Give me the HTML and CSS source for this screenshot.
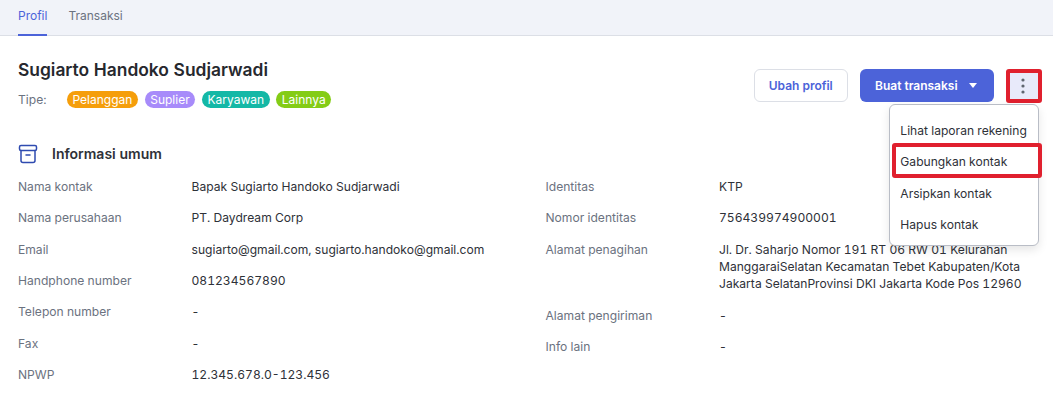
FILE: index.html
```html
<!DOCTYPE html>
<html lang="id">
<head>
<meta charset="utf-8">
<title>Profil kontak</title>
<link rel="stylesheet" href="styles.css">
</head>
<body>
<nav class="tabs">
  <a class="tab active">Profil</a>
  <a class="tab">Transaksi</a>
</nav>
<main class="page">
  <header class="head">
    <div>
      <h1 class="name">Sugiarto Handoko Sudjarwadi</h1>
      <div class="types">
        <span class="types-label">Tipe:</span>
        <span class="badge orange">Pelanggan</span>
        <span class="badge purple">Suplier</span>
        <span class="badge teal">Karyawan</span>
        <span class="badge green">Lainnya</span>
      </div>
    </div>
    <div class="actions">
      <button class="btn outline">Ubah profil</button>
      <button class="btn primary">Buat transaksi <span class="caret"></span></button>
      <button class="more" aria-label="Lainnya">
        <svg width="4" height="16" viewBox="0 0 4 16"><circle cx="2" cy="2" r="1.6"/><circle cx="2" cy="8" r="1.6"/><circle cx="2" cy="14" r="1.6"/></svg>
      </button>
      <ul class="menu">
        <li>Lihat laporan rekening</li>
        <li class="marked">Gabungkan kontak</li>
        <li>Arsipkan kontak</li>
        <li>Hapus kontak</li>
      </ul>
    </div>
  </header>
  <h2 class="section">
    <svg class="section-icon" width="20" height="20" viewBox="0 0 20 20" fill="none" stroke="#2f4bb0" stroke-width="1.5" stroke-linejoin="round" stroke-linecap="round">
      <rect x="1.5" y="1.5" width="17" height="5" rx="1.5"/>
      <path d="M3 6.5V16.5a2 2 0 0 0 2 2H15a2 2 0 0 0 2-2V6.5"/>
      <path d="M8 11H12"/>
    </svg>
    Informasi umum
  </h2>
  <div class="columns">
    <dl class="list left">
      <dt>Nama kontak</dt><dd>Bapak Sugiarto Handoko Sudjarwadi</dd>
      <dt>Nama perusahaan</dt><dd>PT. Daydream Corp</dd>
      <dt>Email</dt><dd>sugiarto@gmail.com, sugiarto.handoko@gmail.com</dd>
      <dt>Handphone number</dt><dd>081234567890</dd>
      <dt>Telepon number</dt><dd>-</dd>
      <dt>Fax</dt><dd>-</dd>
      <dt>NPWP</dt><dd>12.345.678.0-123.456</dd>
    </dl>
    <dl class="list right">
      <dt>Identitas</dt><dd>KTP</dd>
      <dt>Nomor identitas</dt><dd>756439974900001</dd>
      <dt>Alamat penagihan</dt><dd>Jl. Dr. Saharjo Nomor 191 RT 06 RW 01 Kelurahan ManggaraiSelatan Kecamatan Tebet Kabupaten/Kota Jakarta SelatanProvinsi DKI Jakarta Kode Pos 12960</dd>
      <dt>Alamat pengiriman</dt><dd>-</dd>
      <dt>Info lain</dt><dd>-</dd>
    </dl>
  </div>
</main>
</body>
</html>
```
FILE: styles.css
```css
* { box-sizing: border-box; }
html, body { margin: 0; height: 100%; overflow: hidden; }
body { background: #fff; color: #2e3138; font-family: Inter, "Liberation Sans", sans-serif; font-size: 12.1px; line-height: 17.33px; font-variant-numeric: tabular-nums; }

.tabs { display: flex; gap: 21px; height: 36px; padding: 0 18px; background: #f1f3f9; border-bottom: 1px solid #dcdfe6; }
.tab { height: 36px; padding-top: 7px; color: #6b7280; font-size: 12px; }
.tab.active { color: #4c63d9; border-bottom: 2px solid #4c63d9; }

.page { padding: 0 18px; }
.head { display: flex; justify-content: space-between; height: 108px; padding-top: 23px; }
.name { margin: 0; font-size: 17.4px; line-height: 22px; font-weight: 600; color: #26282e; }
.types { display: flex; align-items: center; margin-top: 10px; }
.types-label { width: 49px; color: #6b7280; }
.badge { height: 17.33px; margin-right: 6.8px; padding: 0 5.5px; border-radius: 9px; color: #fff; font-size: 12px; line-height: 17.33px; }
.orange { background: #f59e0b; }
.purple { background: #a78bfa; }
.teal { background: #14b8a6; }
.green { background: #84cc16; }

.actions { position: relative; display: flex; align-items: flex-start; margin-right: -7px; padding-top: 10px; }
.btn { height: 33px; border-radius: 6px; font: 600 12px Inter, "Liberation Sans", sans-serif; white-space: nowrap; }
.outline { width: 94.5px; margin-right: 12px; background: #fff; color: #4c63d9; border: 1px solid #dcdfe6; }
.primary { display: flex; align-items: center; width: 134px; margin-right: 12px; padding: 0 15px; background: #4c63d9; color: #fff; border: 0; }
.caret { margin-left: 11px; border-left: 4.5px solid transparent; border-right: 4.5px solid transparent; border-top: 5px solid #fff; }
.more { display: flex; align-items: center; justify-content: center; width: 36px; height: 34px; padding: 0 2px 0 0; background: #e8eafa; border: 4px solid #e0202e; border-radius: 3px; fill: #5f6570; }

.menu { position: absolute; top: 44.5px; right: 2.7px; width: 150px; margin: 0; padding: 10.5px 0 5px; list-style: none; background: #fff; border: 1px solid #b9bdc6; border-radius: 6px; box-shadow: 0 4px 10px rgba(0,0,0,.1); z-index: 2; }
.menu li { position: relative; height: 31.33px; padding: 7px 10px; white-space: nowrap; }
.marked::after { content: ""; position: absolute; inset: -3.3px -3.7px -0.6px 1.5px; border: 4px solid #e0202e; border-radius: 3px; }

.section { display: flex; align-items: center; gap: 14px; margin: 0 0 14px; font-size: 14px; line-height: 20px; font-weight: 600; color: #2e3138; }
.columns { display: flex; }
.list { display: grid; grid-template-columns: 173.5px 1fr; row-gap: 14px; margin: 0; align-content: start; }
.left { width: 527.5px; }
.right { width: 489.5px; }
dt { color: #6b7280; }
dd { margin: 0; }
```
